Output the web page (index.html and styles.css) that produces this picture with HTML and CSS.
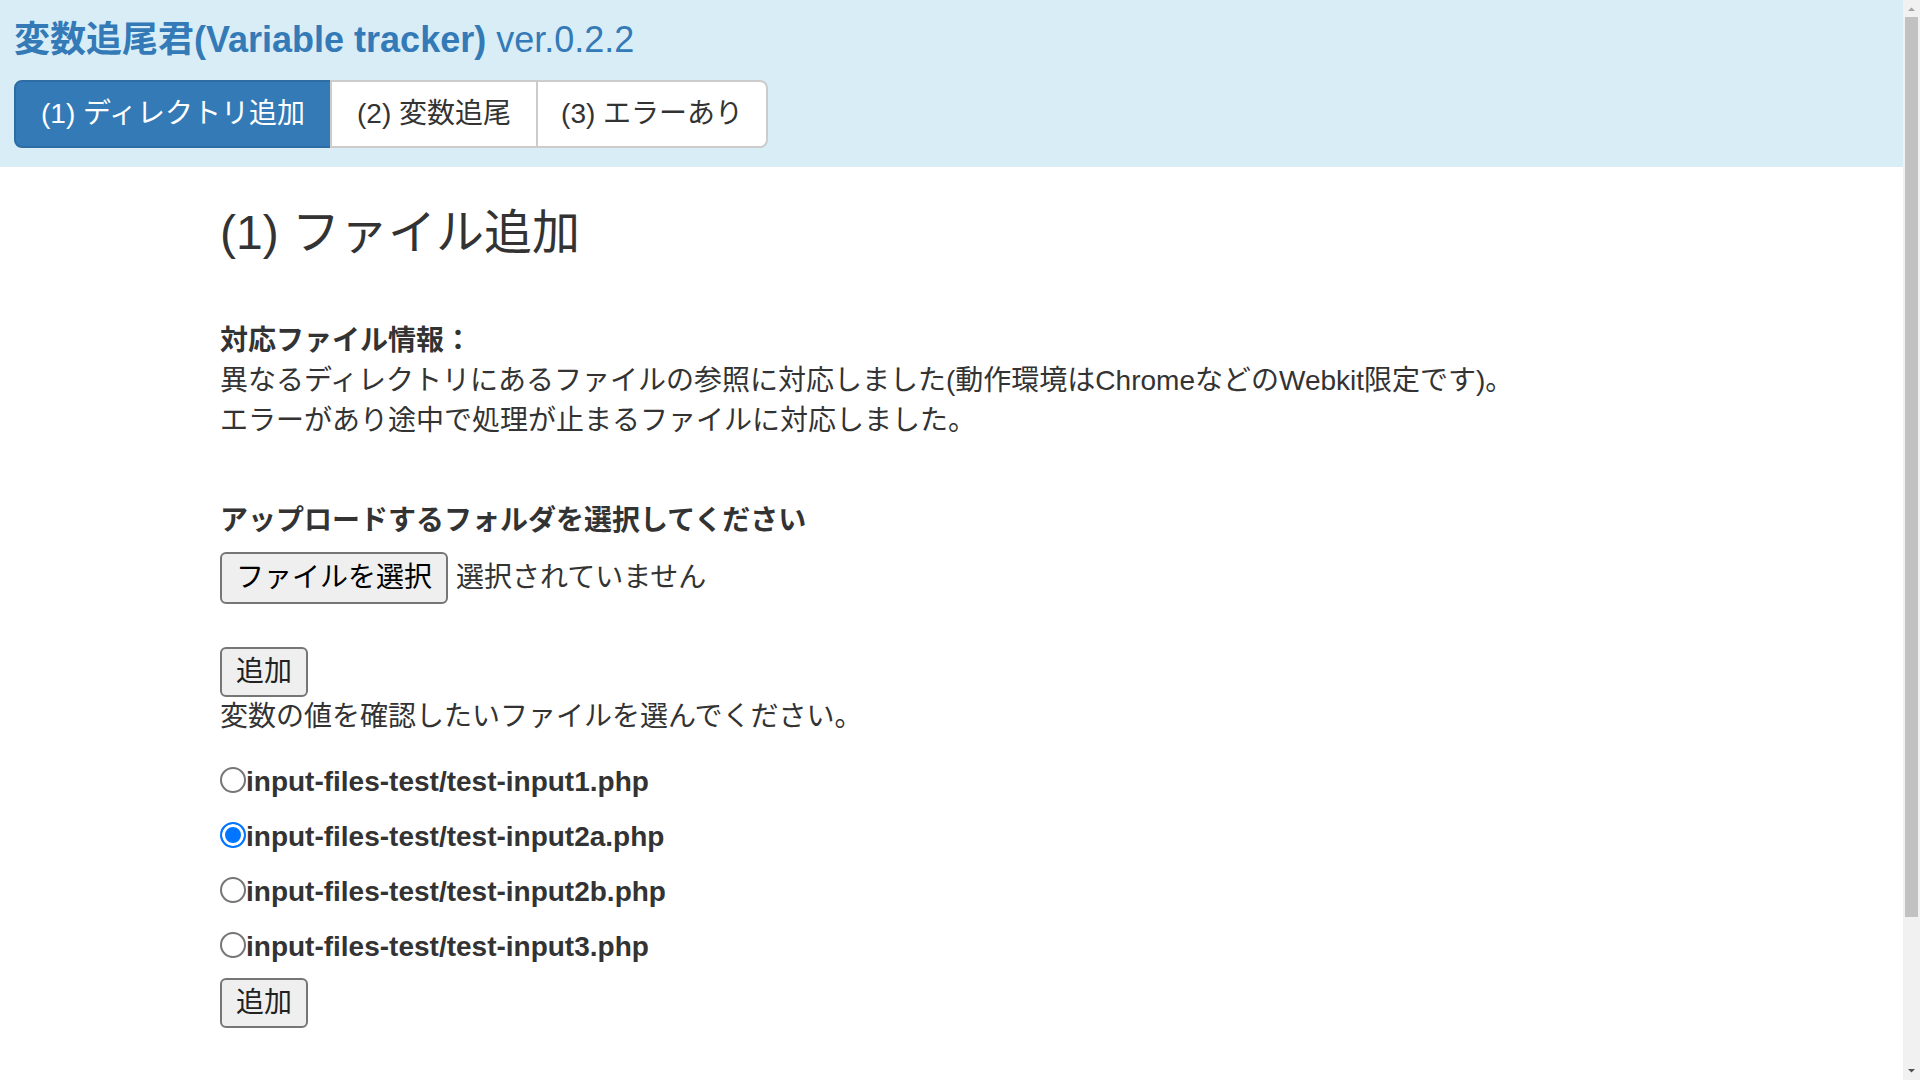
FILE: index.html
```html
<!DOCTYPE html>
<html lang="ja">
<head>
<meta charset="utf-8">
<title>変数追尾君(Variable tracker)</title>
<link rel="stylesheet" href="styles.css">
</head>
<body>
<header class="top">
  <h4 class="app-title">変数追尾君(Variable tracker) <span class="ver">ver.0.2.2</span></h4>
  <nav class="tabs">
    <a class="tab active">(1) ディレクトリ追加</a>
    <a class="tab">(2) 変数追尾</a>
    <a class="tab">(3) エラーあり</a>
  </nav>
</header>
<main class="content">
  <h3 class="page-title">(1) ファイル追加</h3>
  <div class="info">
    <div class="strong">対応ファイル情報：</div>
    <div>異なるディレクトリにあるファイルの参照に対応しました(動作環境はChromeなどのWebkit限定です)。</div>
    <div>エラーがあり途中で処理が止まるファイルに対応しました。</div>
  </div>
  <div class="upload">
    <div class="strong">アップロードするフォルダを選択してください</div>
    <div class="file-row">
      <button class="btn" type="button">ファイルを選択</button>
      <span class="file-status">選択されていません</span>
    </div>
  </div>
  <button class="btn add-1" type="button">追加</button>
  <div class="hint">変数の値を確認したいファイルを選んでください。</div>
  <div class="radios">
    <label class="radio-row"><input type="radio" name="f"><span>input-files-test/test-input1.php</span></label>
    <label class="radio-row"><input type="radio" name="f" checked><span>input-files-test/test-input2a.php</span></label>
    <label class="radio-row"><input type="radio" name="f"><span>input-files-test/test-input2b.php</span></label>
    <label class="radio-row"><input type="radio" name="f"><span>input-files-test/test-input3.php</span></label>
  </div>
  <button class="btn add-2" type="button">追加</button>
</main>
<div class="scrollbar" aria-hidden="true">
  <svg class="sb-arrow sb-up" width="17" height="17" viewBox="0 0 17 17"><path d="M5 11 H12 L8.5 7.5 Z" fill="#a3a3a3"/></svg>
  <div class="sb-track"><div class="sb-thumb"></div></div>
  <svg class="sb-arrow sb-down" width="17" height="17" viewBox="0 0 17 17"><path d="M5 6 H12 L8.5 9.5 Z" fill="#505050"/></svg>
</div>
</body>
</html>
```
FILE: styles.css
```css
html, body {
  margin: 0;
  padding: 0;
}
html {
  scrollbar-width: none;
}
html::-webkit-scrollbar {
  display: none;
}
body {
  font-family: "Liberation Sans", "Noto Sans CJK JP", sans-serif;
  font-size: 28px;
  line-height: 40px;
  color: #333;
  background: #fff;
  padding-right: 17px;
}
.top {
  background: #d9edf7;
  padding: 20px 14px 19px;
}
.app-title {
  margin: 0 0 20px;
  font-size: 36px;
  line-height: 39.6px;
  font-weight: bold;
  color: #337ab7;
}
.app-title .ver {
  font-weight: normal;
}
.tabs {
  display: flex;
}
.tab {
  display: block;
  padding: 12px 25px;
  line-height: 40px;
  font-size: 28px;
  background: #fff;
  border: 2px solid #ccc;
  color: #333;
  margin-left: -2px;
}
.tab:first-child {
  margin-left: 0;
  border-radius: 8px 0 0 8px;
}
.tab:last-child {
  border-radius: 0 8px 8px 0;
  padding: 12px 23px;
}
.tab.active {
  background: #337ab7;
  border-color: #2e6da4;
  color: #fff;
}
.content {
  padding: 0 0 227px 220px;
}
.page-title {
  margin: 40px 0 0;
  font-size: 48px;
  line-height: 52.8px;
  font-weight: normal;
  color: #333;
}
.info {
  margin-top: 62px;
}
.strong {
  font-weight: bold;
}
.upload {
  margin-top: 60px;
}
.file-row {
  display: flex;
  align-items: center;
  margin-top: 11px;
}
.btn {
  display: block;
  font-family: inherit;
  font-size: 28px;
  line-height: 40px;
  color: #000;
  background: #efefef;
  border: 2px solid #767676;
  border-radius: 6px;
  padding: 4px 14px;
  margin: 0;
}
.file-status {
  margin-left: 8px;
  color: #333;
}
.add-1 {
  margin-top: 43px;
}
.add-1, .add-2 {
  padding: 3px 14px;
  color: #222;
}
.radios {
  margin-top: 25px;
  display: flex;
  flex-direction: column;
  gap: 15px;
}
.radio-row {
  display: flex;
  align-items: flex-start;
  font-weight: bold;
  line-height: 40px;
  height: 40px;
}
.radio-row input {
  appearance: none;
  -webkit-appearance: none;
  width: 26px;
  height: 26px;
  margin: 5px 0 0;
  border: 2px solid #767676;
  border-radius: 50%;
  background: #fff;
  box-sizing: border-box;
  flex: none;
}
.radio-row input:checked {
  border-color: #0075ff;
  background: #0075ff;
  box-shadow: inset 0 0 0 3px #fff;
}
.add-2 {
  margin-top: 11px;
}
.scrollbar {
  position: fixed;
  top: 0;
  right: 0;
  width: 17px;
  height: 100vh;
  background: #f1f1f1;
  display: flex;
  flex-direction: column;
}
.sb-arrow {
  display: block;
  flex: none;
}
.sb-track {
  flex: 1;
  padding: 0 2px;
}
.sb-thumb {
  height: 900px;
  background: #c1c1c1;
}
```
